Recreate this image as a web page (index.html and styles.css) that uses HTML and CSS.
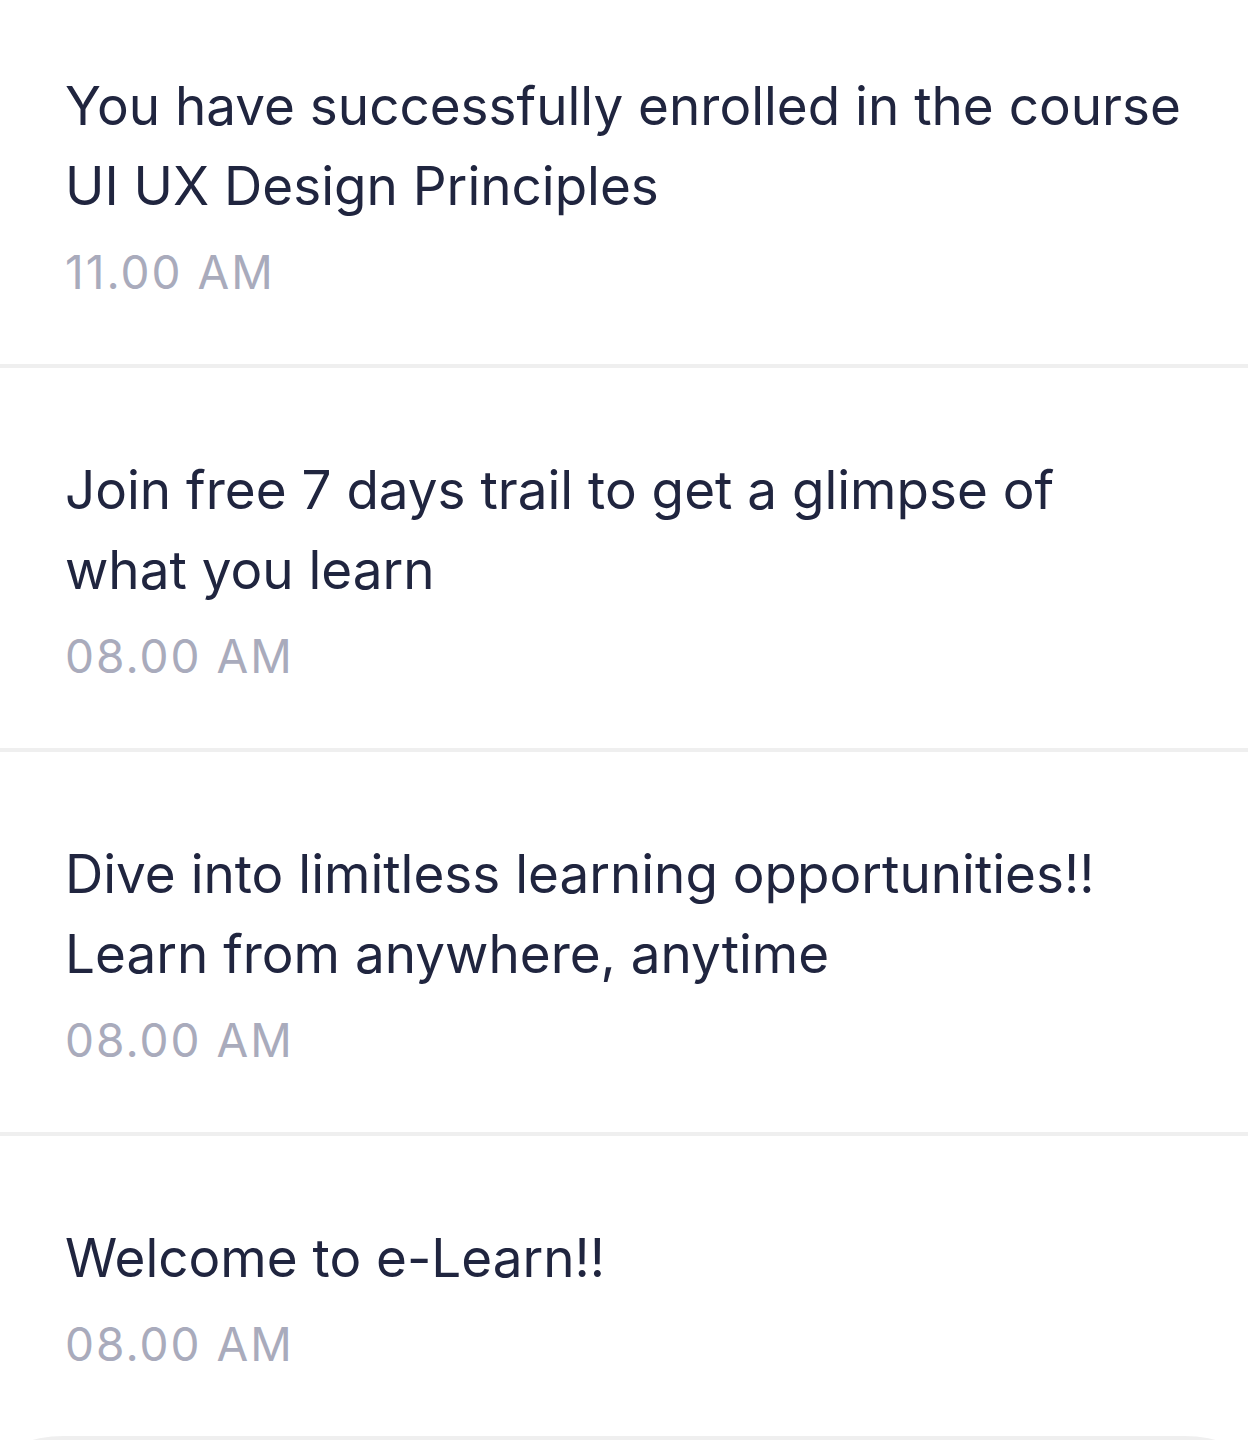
FILE: index.html
```html
<!DOCTYPE html>
<html>
<head>
<meta charset="utf-8">
<link rel="stylesheet" href="styles.css">
</head>
<body>
<div class="list">
  <div class="item first">
    <div class="title">You have successfully enrolled in the course UI UX Design Principles</div>
    <div class="time">11.00 AM</div>
  </div>
  <div class="item">
    <div class="title">Join free 7 days trail to get a glimpse of what you learn</div>
    <div class="time">08.00 AM</div>
  </div>
  <div class="item">
    <div class="title">Dive into limitless learning opportunities!! Learn from anywhere, anytime</div>
    <div class="time">08.00 AM</div>
  </div>
  <div class="item last">
    <div class="title">Welcome to e-Learn!!</div>
    <div class="time">08.00 AM</div>
  </div>
  <div class="footer-card"></div>
</div>
</body>
</html>
```

FILE: styles.css
```css
html, body {
  margin: 0;
  padding: 0;
  background: #ffffff;
}
body {
  font-family: "Inter", "Noto Sans", sans-serif;
  width: 1248px;
}
.list {
  display: flex;
  flex-direction: column;
}
.item {
  padding: 82px 0 62px 65px;
  border-bottom: 4px solid #efefef;
  display: flex;
  flex-direction: column;
}
.item.first {
  padding-top: 66px;
}
.item.last {
  border-bottom: none;
}
.title {
  font-size: 53px;
  line-height: 80px;
  color: #20253f;
  font-weight: 400;
  width: 1118px;
}
.time {
  font-size: 46px;
  line-height: 60px;
  letter-spacing: 2px;
  margin-top: 16px;
  color: #a9abbc;
}
.footer-card {
  height: 40px;
  background: #efefef;
  border-radius: 64px 64px 0 0 / 30px 30px 0 0;
}
```
